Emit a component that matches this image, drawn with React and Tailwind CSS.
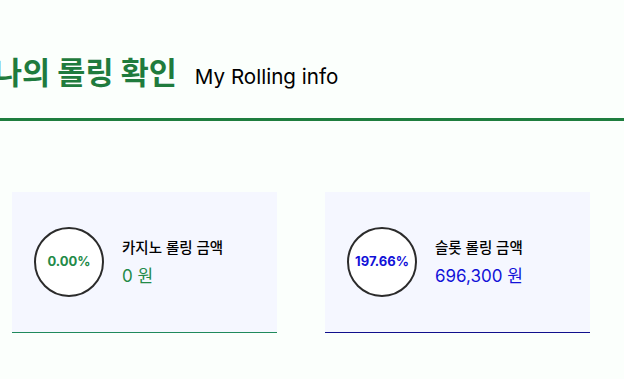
import React from 'react';

export default function App() {
  const cards = [
    {
      title: '카지노 롤링 금액',
      percent: '0.00%',
      amount: '0 원',
      accent: 'text-[#238a48]',
      border: 'border-[#1f8a5c]',
    },
    {
      title: '슬롯 롤링 금액',
      percent: '197.66%',
      amount: '696,300 원',
      accent: 'text-[#1212d8]',
      border: 'border-[#10108c]',
    },
  ];

  return (
    <div
      className="min-h-[379px] w-[624px] overflow-hidden bg-[#fbfffc]"
      style={{ fontFamily: 'Inter, "Noto Sans CJK KR", sans-serif' }}
    >
      {/* Header */}
      <div className="flex items-baseline gap-[18px] pt-[52px] pb-[24px] ml-[-6px]">
        <h1 className="text-[30.5px] font-bold leading-[42px] text-[#1f7b3d] whitespace-nowrap">
          나의 롤링 확인
        </h1>
        <span className="text-[20.6px] leading-[28px] text-black whitespace-nowrap">My Rolling info</span>
      </div>
      <div className="h-[3px] w-full bg-[#1e7e3e]" />

      {/* Cards */}
      <div className="flex gap-[48px] pl-[12px] pt-[71px]">
        {cards.map((card, idx) => (
          <div
            key={idx}
            className={`flex h-[141px] w-[265px] items-center gap-[18px] border-b ${card.border} bg-[#f5f7ff] pl-[22px]`}
          >
            <div className="flex h-[70px] w-[70px] shrink-0 items-center justify-center rounded-full border-2 border-[#2b2b2b] bg-white">
              <span className={`text-[13px] font-bold ${card.accent}`}>{card.percent}</span>
            </div>
            <div className="flex flex-col gap-[6px] pt-[2px]">
              <span className="text-[14.5px] font-medium leading-[20px] text-black">{card.title}</span>
              <span className={`text-[17px] leading-[24px] ${card.accent}`}>{card.amount}</span>
            </div>
          </div>
        ))}
      </div>
    </div>
  );
}
